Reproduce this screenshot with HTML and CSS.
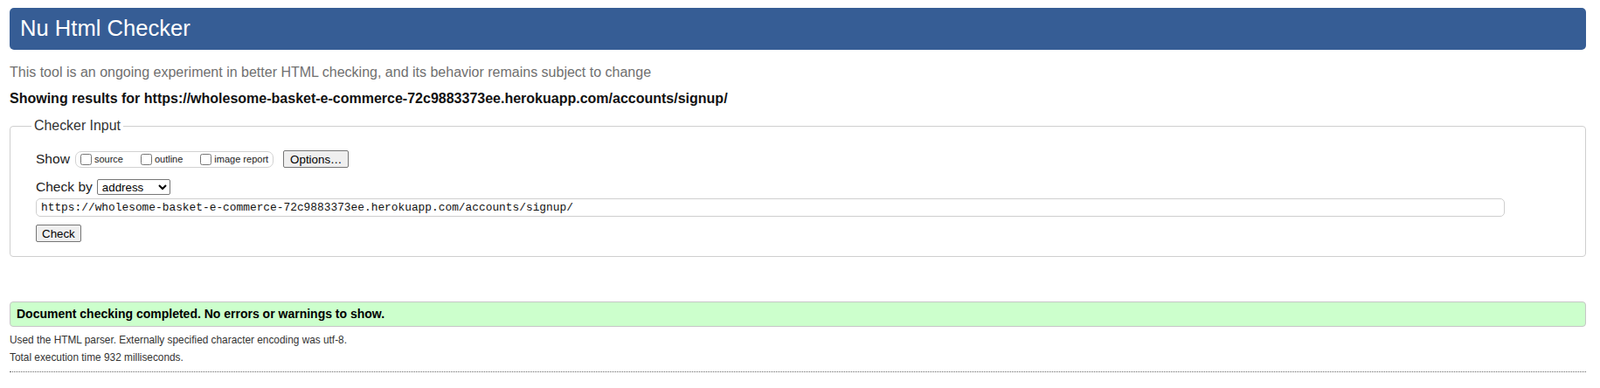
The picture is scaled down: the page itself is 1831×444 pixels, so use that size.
FILE: index.html
```html
<!DOCTYPE html>
<html lang="en">
<head>
  <meta charset="UTF-8">
  <meta name="viewport" content="width=device-width, initial-scale=1">
  <title>Showing results for https://wholesome-basket-e-commerce-72c9883373ee.herokuapp.com/accounts/signup/ - Nu Html Checker</title>
  <link rel="stylesheet" href="styles.css">
</head>
<body>

<h1 class="title">Nu Html Checker</h1>
<p class="about">This tool is an ongoing experiment in better HTML checking, and its behavior remains subject to change</p>
<p class="results">Showing results for https://wholesome-basket-e-commerce-72c9883373ee.herokuapp.com/accounts/signup/</p>

<form class="checker">
  <fieldset class="checker-input">
    <legend>Checker Input</legend>

    <div class="row show-row">
      <span class="row-label">Show</span>
      <div class="show-box">
        <label><input type="checkbox">source</label>
        <label><input type="checkbox">outline</label>
        <label><input type="checkbox">image report</label>
      </div>
      <button type="button" class="btn options">Options…</button>
    </div>

    <div class="row check-by">
      <label for="docselect">Check by</label>
      <select id="docselect">
        <option>address</option>
        <option>file upload</option>
        <option>text input</option>
      </select>
    </div>

    <input type="url" class="doc-url" value="https://wholesome-basket-e-commerce-72c9883373ee.herokuapp.com/accounts/signup/">
    <button type="button" class="btn check">Check</button>
  </fieldset>
</form>

<p class="success">Document checking completed. No errors or warnings to show.</p>
<p class="details first">Used the HTML parser. Externally specified character encoding was utf-8.</p>
<p class="details">Total execution time 932 milliseconds.</p>
<hr class="end">

</body>
</html>
```

FILE: styles.css
```css
body {
  font-family: "Liberation Sans", Arial, sans-serif;
  font-size: 15.55px;
  color: #222;
  background: #fff;
  margin: 0;
  padding: 9px 16px 0 11px;
}

.title {
  margin: 0;
  height: 48px;
  line-height: 46px;
  padding-left: 12px;
  background-color: #365d95;
  color: #fff;
  font-size: 25.6px;
  font-weight: normal;
  border-radius: 5px;
}

.about {
  margin: 16px 0 0;
  line-height: 20px;
  font-size: 16px;
  color: #707070;
}
.results {
  margin: 10px 0 0;
  line-height: 20px;
  font-size: 16px;
  font-weight: bold;
  color: #111;
}

.checker {
  margin: 0;
}
.checker-input {
  margin: 11px 0 0;
  padding: 0 12px 16px 29px;
  border: 1px solid #cfcfcf;
  border-radius: 4px;
}
.checker-input legend {
  margin-left: -5px;
  padding: 0 3px;
  line-height: 20px;
  font-size: 15.9px;
  color: #333;
}

.row {
  display: flex;
  align-items: center;
  height: 20px;
  line-height: 20px;
}
.show-row {
  margin-top: 18px;
}
.show-box {
  display: flex;
  align-items: center;
  box-sizing: border-box;
  height: 19px;
  margin-left: 6px;
  padding: 0 5px 0 5px;
  border: 1px solid #d2d2d2;
  border-radius: 7px;
}
.show-box label {
  display: flex;
  align-items: center;
  font-size: 11px;
  color: #222;
}
.show-box label + label {
  margin-left: 20px;
}
.show-box input {
  width: 13px;
  height: 13px;
  margin: 0 3px 0 0;
}

.btn {
  box-sizing: border-box;
  height: 20px;
  padding: 0 6px;
  font-family: "Liberation Sans", Arial, sans-serif;
  font-size: 13.33px;
  color: #000;
  background: #efefef;
  border: 1px solid #767676;
  border-radius: 2px;
}
.options {
  margin-left: 11px;
  padding: 0 7px;
}

.check-by {
  margin-top: 12px;
}
.check-by select {
  box-sizing: border-box;
  width: 84px;
  height: 18px;
  margin-left: 5px;
  padding: 0 0 0 1px;
  font-family: "Liberation Sans", Arial, sans-serif;
  font-size: 13.33px;
  color: #000;
  background: #fff;
  border: 1px solid #767676;
  border-radius: 2px;
}

.doc-url {
  display: block;
  box-sizing: border-box;
  width: calc(100% - 80px);
  height: 21px;
  margin: 3px 0 0;
  padding: 0 5px;
  font-family: "Liberation Mono", "DejaVu Sans Mono", monospace;
  font-size: 12.85px;
  color: #111;
  border: 1px solid #cfcfcf;
  border-radius: 5px;
}
.check {
  display: block;
  margin-top: 9px;
}

.success {
  box-sizing: border-box;
  height: 29px;
  margin: 51px 0 0;
  padding: 0 7px;
  line-height: 27px;
  font-size: 14px;
  font-weight: bold;
  color: #000;
  background: #ccffcc;
  border: 1px solid #c6c6c6;
  border-radius: 4px;
}
.details {
  margin: 0;
  line-height: 20px;
  font-size: 11.85px;
  color: #333;
}
.details.first {
  margin-top: 5px;
}

.end {
  margin: 6px 0 0;
  height: 0;
  border: 0;
  border-top: 1px dotted #666;
}
```
